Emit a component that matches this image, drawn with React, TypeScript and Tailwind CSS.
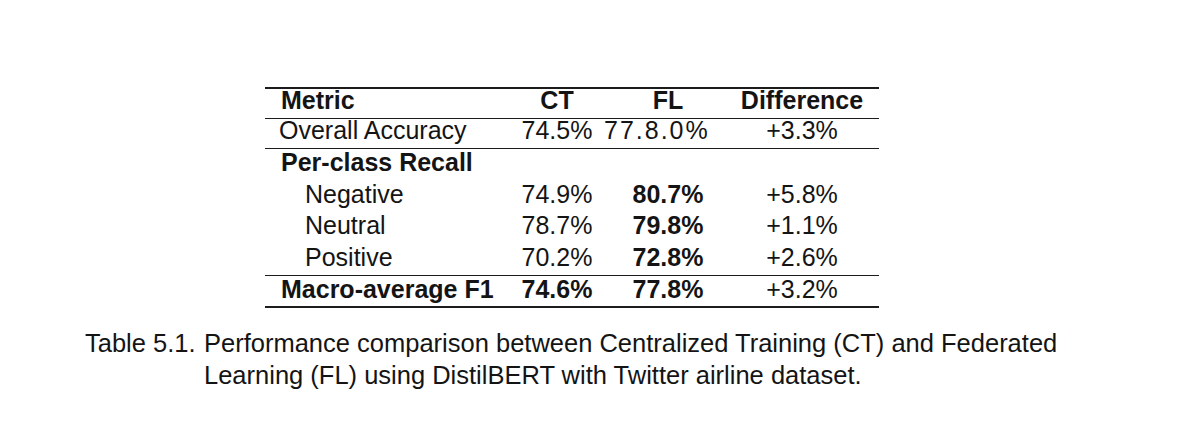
import React from 'react';

const rows = [
  { label: 'Negative', ct: '74.9%', fl: '80.7%', diff: '+5.8%' },
  { label: 'Neutral', ct: '78.7%', fl: '79.8%', diff: '+1.1%' },
  { label: 'Positive', ct: '70.2%', fl: '72.8%', diff: '+2.6%' },
];

const grid = 'grid grid-cols-[245px_94px_128px_140px] pr-[7px]';

export default function App() {
  return <div className="w-[1190px] h-[445px] bg-white text-[#141414] overflow-hidden" style={{ fontFamily: '"Liberation Sans", Arial, sans-serif' }}>
      <div className="pt-[87px] pl-[265px]">
        {/* Table */}
        <div className="w-[614px] text-[25px] leading-[22px] border-t-2 border-b-2 border-[#1c1c1c]">
          <div className={`${grid} h-[30px] font-bold border-b border-[#1c1c1c]`}>
            <div className="pl-[16px]">Metric</div>
            <div className="text-center">CT</div>
            <div className="text-center">FL</div>
            <div className="text-center">Difference</div>
          </div>
          <div className={`${grid} h-[30px] border-b border-[#1c1c1c]`}>
            <div className="pl-[14px]">Overall Accuracy</div>
            <div className="text-center">74.5%</div>
            <div className="text-left tracking-[2px]">77.8.0%</div>
            <div className="text-center">+3.3%</div>
          </div>
          <div className="border-b border-[#1c1c1c]">
            <div className={`${grid} h-[31.5px] pt-[2px] font-bold`}>
              <div className="pl-[16px]">Per-class Recall</div>
            </div>
            {rows.map(r => <div key={r.label} className={`${grid} h-[31.5px] pt-[2px]`}>
                <div className="pl-[40px]">{r.label}</div>
                <div className="text-center">{r.ct}</div>
                <div className="text-center font-bold">{r.fl}</div>
                <div className="text-center">{r.diff}</div>
              </div>)}
          </div>
          <div className={`${grid} h-[30px] pt-[2px] font-bold`}>
            <div className="pl-[16px]">Macro-average F1</div>
            <div className="text-center">74.6%</div>
            <div className="text-center">77.8%</div>
            <div className="text-center font-normal">+3.2%</div>
          </div>
        </div>
      </div>
      {/* Caption */}
      <div className="mt-[19px] pl-[85px] flex text-[25.5px] leading-[32px]">
        <span className="w-[119px] shrink-0 whitespace-nowrap">Table 5.1.</span>
        <p>
          Performance comparison between Centralized Training (CT) and Federated
          <br />
          Learning (FL) using DistilBERT with Twitter airline dataset.
        </p>
      </div>
    </div>;
}
